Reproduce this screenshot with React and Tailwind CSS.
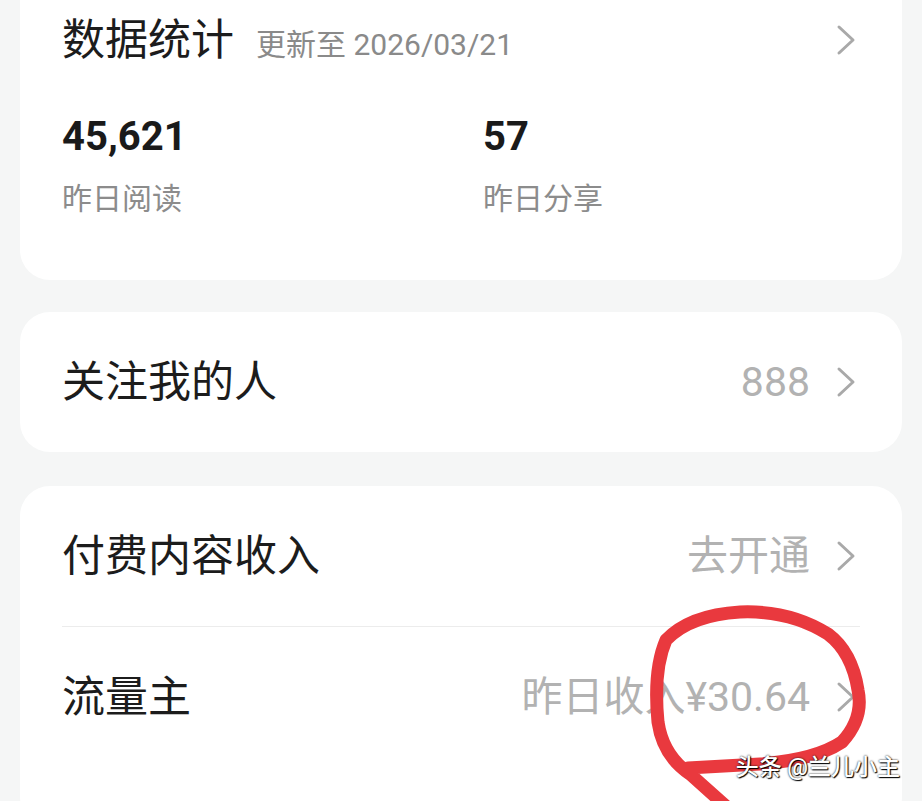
import React from 'react'

const font = { fontFamily: 'Roboto, "Noto Sans CJK SC", "Noto Sans", sans-serif' }

const Chevron = ({ className = '' }) => (
  <svg width="24" height="32" viewBox="0 0 24 32" className={className} fill="none">
    <path d="M5 3 L19 16 L5 29" stroke="#a9a9a9" strokeWidth="3" strokeLinecap="round" strokeLinejoin="round" />
  </svg>
)

const Row = ({ title, value }) => (
  <div className="h-[140px] flex items-center justify-between pl-[42px] pr-[44px]">
    <span className="text-[43px] leading-none text-[#1c1c1c]">{title}</span>
    <div className="flex items-center">
      <span className="text-[41px] leading-none text-[#b2b2b2]">{value}</span>
      <Chevron className="ml-[24px]" />
    </div>
  </div>
)

const Stat = ({ num, label, wide }) => (
  <div className={wide ? 'w-[421px]' : ''}>
    <div className="text-[40px] leading-[48px] font-bold text-[#1a1a1a]">{num}</div>
    <div className="mt-[18px] text-[30px] leading-[40px] text-[#8c8c8c]">{label}</div>
  </div>
)

export default function App() {
  return (
    <div className="relative w-full h-[801px] overflow-hidden bg-[#f5f6f6] px-[20px]" style={font}>
      {/* 数据统计 */}
      <div className="-mt-[30px] bg-white rounded-[30px] pt-[44px] pb-[61px] pl-[42px] pr-[44px]">
        <div className="flex items-center justify-between h-[52px]">
          <div className="flex items-baseline">
            <span className="text-[43px] leading-[52px] text-[#1c1c1c]">数据统计</span>
            <span className="ml-[22px] text-[30px] text-[#8a8a8a]">更新至 2026/03/21</span>
          </div>
          <Chevron />
        </div>
        <div className="flex mt-[47px]">
          <Stat num="45,621" label="昨日阅读" wide />
          <Stat num="57" label="昨日分享" />
        </div>
      </div>

      <div className="mt-[32px] bg-white rounded-[30px]">
        <Row title="关注我的人" value="888" />
      </div>

      <div className="mt-[34px] bg-white rounded-[30px] pb-[60px]">
        <Row title="付费内容收入" value="去开通" />
        <div className="mx-[42px] h-px bg-[#ececec]" />
        <Row title="流量主" value="昨日收入¥30.64" />
      </div>

      {/* hand drawn mark */}
      <svg className="absolute left-0 top-0 pointer-events-none" width="922" height="801" viewBox="0 0 922 801" fill="none">
        <path
          d="M688 768 L760 764 Q815 760 842 742 Q864 718 858 690 Q852 652 828 634 Q790 610 740 612 Q690 615 666 640 Q653 670 658 722 Q663 756 690 774 L728 808"
          stroke="#e9393e"
          strokeWidth="13"
          strokeLinecap="round"
          strokeLinejoin="round"
        />
      </svg>

      <div className="absolute right-[22px] top-[753px] text-[23px] leading-[30px] font-medium text-white [text-shadow:0_0_2px_#000,1px_1px_1px_#000]">
        头条 @兰儿小主
      </div>
    </div>
  )
}
